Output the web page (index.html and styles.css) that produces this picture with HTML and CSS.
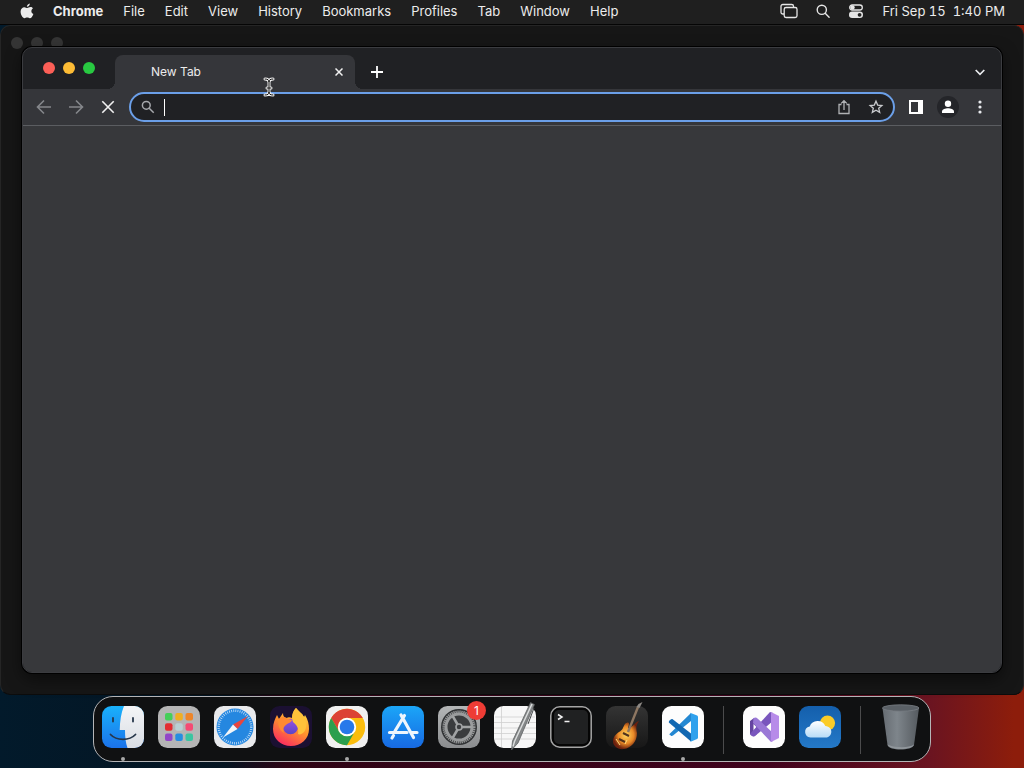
FILE: index.html
```
<!DOCTYPE html>
<html lang="en">
<head>
    <meta charset="utf-8">
    <title>New Tab</title>
    <link rel="stylesheet" href="styles.css">
</head>
<body>
    <header class="menubar">
        <nav class="menus">
            <button class="apple" aria-label="Apple menu">
                <svg width="14" height="16" viewBox="0 0 14 16" fill="#ececec"><path d="M9.8.4c.1 1.7-1.2 3.3-2.9 3.4C6.700 2.200 8.200.6 9.800.4zM12.900 5.400c-2.200 1.400-1.900 4.500.5 5.500-.7 2-2.100 4.300-3.500 4.300-1.100 0-1.400-.7-2.700-.7s-1.700.7-2.700.7C2.700 15.200.6 11.700.6 8.800c0-3 1.900-4.600 3.800-4.600 1.200 0 2.100.8 2.900.8.7 0 1.800-.9 3.200-.9 1 0 1.900.5 2.400 1.300z"/></svg>
            </button>
            <button class="app-name">Chrome</button>
            <button>File</button>
            <button>Edit</button>
            <button>View</button>
            <button>History</button>
            <button>Bookmarks</button>
            <button>Profiles</button>
            <button>Tab</button>
            <button>Window</button>
            <button>Help</button>
        </nav>
        <div class="status">
            <button aria-label="Screen mirroring">
                <svg width="18" height="16" viewBox="0 0 18 16" fill="none" stroke="#e6e6e6" stroke-width="1.300"><path d="M4 11H2.800A1.800 1.800 0 0 1 1 9.200V3.300a1.800 1.800 0 0 1 1.800-1.800h8.900a1.800 1.800 0 0 1 1.800 1.800V4"/><rect x="4.200" y="4.500" width="12.800" height="10" rx="1.800"/></svg>
            </button>
            <button aria-label="Spotlight">
                <svg width="14" height="16" viewBox="0 0 14 16" fill="none" stroke="#e6e6e6" stroke-width="1.400" stroke-linecap="round"><circle cx="5.800" cy="6.800" r="4.600"/><path d="M9.200 10.300l3.900 4"/></svg>
            </button>
            <button aria-label="Control Center">
                <svg width="16" height="16" viewBox="0 0 16 16"><rect x="1.700" y="2" width="12.600" height="5" rx="2.500" fill="none" stroke="#e6e6e6" stroke-width="1.300"/><circle cx="4.500" cy="4.500" r="2.200" fill="#e6e6e6"/><rect x="1" y="8.600" width="14" height="6.400" rx="3.200" fill="#e6e6e6"/><circle cx="11.600" cy="11.800" r="1.900" fill="#222"/></svg>
            </button>
            <time class="clock">Fri Sep 15&nbsp; 1:40 PM</time>
        </div>
    </header>

    <main class="desktop">
        <div class="back-window">
            <div class="lights dim"><span></span><span></span><span></span></div>
        </div>

        <section class="browser">
            <div class="tabstrip">
                <div class="lights">
                    <button class="red" aria-label="Close window"></button>
                    <button class="yellow" aria-label="Minimize window"></button>
                    <button class="green" aria-label="Zoom window"></button>
                </div>
                <div class="tab">
                    <span class="tab-title">New Tab</span>
                    <button class="tab-close" aria-label="Close tab">
                        <svg width="8" height="8" viewBox="0 0 8 8" stroke="#f1f1f1" stroke-width="1.500"><path d="M.5.500l7 7M7.500.500l-7 7"/></svg>
                    </button>
                </div>
                <button class="new-tab" aria-label="New tab">
                    <svg width="12" height="12" viewBox="0 0 12 12" stroke="#fff" stroke-width="1.800"><path d="M6 0v12M0 6h12"/></svg>
                </button>
                <button class="tab-search" aria-label="Search tabs">
                    <svg width="10" height="7" viewBox="0 0 10 7" fill="none" stroke="#e8eaed" stroke-width="1.700"><path d="M.7 1L5 5.300 9.300 1"/></svg>
                </button>
            </div>
            <div class="toolbar">
                <button aria-label="Back">
                    <svg width="16" height="16" viewBox="0 0 16 16" fill="none" stroke="#85878b" stroke-width="1.600"><path d="M15 8H2M8 1.500L1.500 8 8 14.500"/></svg>
                </button>
                <button aria-label="Forward">
                    <svg width="16" height="16" viewBox="0 0 16 16" fill="none" stroke="#85878b" stroke-width="1.600"><path d="M1 8h13M8 1.500L14.500 8 8 14.500"/></svg>
                </button>
                <button aria-label="Stop">
                    <svg width="16" height="16" viewBox="0 0 16 16" stroke="#f1f1f1" stroke-width="1.600"><path d="M2.300 2.300l11.400 11.400M13.700 2.300L2.300 13.700"/></svg>
                </button>
                <div class="omnibox">
                    <svg class="search" width="14" height="14" viewBox="0 0 14 14" fill="none" stroke="#a6a8ac" stroke-width="1.500"><circle cx="5.300" cy="5.300" r="3.900"/><path d="M8.200 8.200l4.500 4.500"/></svg>
                    <span class="caret"></span>
                    <input type="text" aria-label="Address and search bar">
                    <button aria-label="Share">
                        <svg width="14" height="16" viewBox="0 0 14 16" fill="none" stroke="#b0b2b5" stroke-width="1.300"><path d="M4.500 5.500H2v9h10v-9H9.500M7 11V1.800M4.200 4.400L7 1.600l2.800 2.800"/></svg>
                    </button>
                    <button aria-label="Bookmark this tab">
                        <svg width="16" height="16" viewBox="0 0 16 16" fill="none" stroke="#c9cbce" stroke-width="1.300"><path d="M8 2.200l1.700 3.900 4.200.4-3.200 2.800 1 4.100L8 11.300l-3.700 2.100 1-4.100-3.200-2.800 4.200-.4z"/></svg>
                    </button>
                </div>
                <button aria-label="Side panel">
                    <svg width="14" height="14" viewBox="0 0 14 14"><path fill="#fff" fill-rule="evenodd" d="M0 0h14v14H0zM2 2v10h7V2z"/></svg>
                </button>
                <button aria-label="Profile">
                    <svg width="22" height="22" viewBox="0 0 22 22"><circle cx="11" cy="11" r="11" fill="#242529"/><circle cx="11" cy="7.800" r="3.200" fill="#fff"/><path fill="#fff" d="M5 17v-1.500c0-2.200 3.500-3.300 6-3.300s6 1.100 6 3.300V17z"/></svg>
                </button>
                <button aria-label="Chrome menu">
                    <svg width="4" height="14" viewBox="0 0 4 14" fill="#e8eaed"><circle cx="2" cy="2" r="1.600"/><circle cx="2" cy="7" r="1.600"/><circle cx="2" cy="12" r="1.600"/></svg>
                </button>
            </div>
            <div class="page"></div>
        </section>
    </main>

    <nav class="dock">
        <button class="app running" aria-label="Finder">
            <svg viewBox="0 0 42 42">
                <defs>
                    <linearGradient id="finderBlue" x2="0" y2="1"><stop stop-color="#19b1fb"/><stop offset="1" stop-color="#1b72ea"/></linearGradient>
                    <linearGradient id="finderWhite" x2="0" y2="1"><stop stop-color="#f4f5f7"/><stop offset="1" stop-color="#d9dde4"/></linearGradient>
                    <clipPath id="tile"><rect width="42" height="42" rx="9.500"/></clipPath>
                </defs>
                <g clip-path="url(#tile)">
                    <rect width="42" height="42" fill="url(#finderBlue)"/>
                    <path d="M22 0c-3 7-4 15-4.300 24h5.300c0 7 .7 13 2.500 18H42V0z" fill="url(#finderWhite)"/>
                    <path d="M11 12v3.500M31 12v3.500M8.500 28.500c6 6.500 19 6.500 25 0" fill="none" stroke="#26364a" stroke-width="1.800" stroke-linecap="round"/>
                </g>
            </svg>
        </button>
        <button class="app" aria-label="Launchpad">
            <svg viewBox="0 0 42 42">
                <rect width="42" height="42" rx="9.500" fill="#b5b5b5"/>
                <rect x="7" y="7" width="7.500" height="7.500" rx="2" fill="#45cf59"/><rect x="17.300" y="7" width="7.500" height="7.500" rx="2" fill="#efae22"/><rect x="27.500" y="7" width="7.500" height="7.500" rx="2" fill="#ed8529"/>
                <rect x="7" y="17.300" width="7.500" height="7.500" rx="2" fill="#e32c32"/><rect x="17.300" y="17.300" width="7.500" height="7.500" rx="2" fill="#b9d0d4"/><rect x="27.500" y="17.300" width="7.500" height="7.500" rx="2" fill="#f54b74"/>
                <rect x="7" y="27.500" width="7.500" height="7.500" rx="2" fill="#9246c8"/><rect x="17.300" y="27.500" width="7.500" height="7.500" rx="2" fill="#268ee0"/><rect x="27.500" y="27.500" width="7.500" height="7.500" rx="2" fill="#3bc5a0"/>
            </svg>
        </button>
        <button class="app" aria-label="Safari">
            <svg viewBox="0 0 42 42">
                <rect width="42" height="42" rx="9.500" fill="#e9eaec"/>
                <circle cx="21" cy="21" r="18.500" fill="#2587e0"/>
                <circle cx="21" cy="21" r="16.300" fill="none" stroke="#c8e1f8" stroke-width="2.400" stroke-dasharray=".8 1.333"/>
                <path d="M34 10L19 18.500l4.500 4.500z" fill="#e8453e"/><path d="M9 31.500l10-13 4.500 4.500z" fill="#f3f5f7"/>
            </svg>
        </button>
        <button class="app" aria-label="Firefox">
            <svg viewBox="0 0 42 42">
                <defs>
                    <linearGradient id="fox" x1=".85" y1="0" x2=".3" y2="1"><stop stop-color="#ffe045"/><stop offset=".5" stop-color="#ff942c"/><stop offset="1" stop-color="#fb2b60"/></linearGradient>
                    <linearGradient id="globe" x2="0" y2="1"><stop stop-color="#9a51df"/><stop offset="1" stop-color="#5b45c7"/></linearGradient>
                </defs>
                <rect width="42" height="42" rx="9.500" fill="#1b1032"/>
                <path d="M26 2c2 3 6 5 8 9l1-2c3 5 4 9 4 14 0 10-8 17-18 17S3 33 3 23c0-6 2-10 4-14l2 4 4-6c0 3 1 4 3 5 3-1 4-1 6 0 0-4 1-7 4-10z" fill="url(#fox)"/>
                <circle cx="20.500" cy="20.500" r="7.800" fill="url(#globe)"/>
                <path d="M9 13c4-3 6-2 9 0l4 1c-1 3-4 3-6 5-3 2-3 5-2 8-5-3-7-9-5-14z" fill="#ff8a32"/>
                <path d="M26 2c2 3 6 5 8 9 3 6 3 11 0 15-2 2-4 3-6 2 1-5-1-9-5-12-2-5 0-11 3-14z" fill="#ffc23a"/>
            </svg>
        </button>
        <button class="app running" aria-label="Chrome">
            <svg viewBox="0 0 42 42">
                <rect width="42" height="42" rx="9.500" fill="#f0f0f0"/>
                <circle cx="21" cy="21" r="18.200" fill="#fbbd0d"/>
                <path d="M5.240 11.900A18.200 18.200 0 0 1 36.760 11.900H21A9.100 9.100 0 0 0 13.120 25.550z" fill="#dc4234"/>
                <path d="M5.240 11.900A18.200 18.200 0 0 0 21 39.200L28.880 25.550A9.100 9.100 0 0 1 13.120 25.550z" fill="#2c9f4e"/>
                <circle cx="21" cy="21" r="9.200" fill="#fff"/><circle cx="21" cy="21" r="7.300" fill="#2879ea"/>
            </svg>
        </button>
        <button class="app" aria-label="App Store">
            <svg viewBox="0 0 42 42">
                <defs><linearGradient id="store" x2="0" y2="1"><stop stop-color="#1ba6f8"/><stop offset="1" stop-color="#1769e2"/></linearGradient></defs>
                <rect width="42" height="42" rx="9.500" fill="url(#store)"/>
                <path d="M22.500 9.500L13 25M19 9l12.500 22.500M7.500 26.500H25M30 26.500h5M11.500 29.500L10 32" stroke="#eff6fd" stroke-width="3.200" stroke-linecap="round"/>
            </svg>
        </button>
        <button class="app" aria-label="System Settings, 1 notification">
            <svg viewBox="0 0 42 42">
                <defs><linearGradient id="metal" x2="0" y2="1"><stop stop-color="#b4b6b7"/><stop offset="1" stop-color="#8b8d8f"/></linearGradient></defs>
                <rect width="42" height="42" rx="9.500" fill="url(#metal)"/>
                <circle cx="21" cy="21" r="18" fill="#303234"/>
                <circle cx="21" cy="21" r="15.300" fill="none" stroke="#969899" stroke-width="2.500" stroke-dasharray="1.300 .7"/>
                <circle cx="21" cy="21" r="13" fill="#3a3c3e" stroke="#9a9c9d" stroke-width="3"/>
                <path d="M21 21h12.500M21 21l-6.300-10.800M21 21l-6.300 10.800" stroke="#a1a3a4" stroke-width="2.600"/>
                <circle cx="21" cy="21" r="3" fill="#3c3e40" stroke="#a1a3a4" stroke-width="1.600"/>
            </svg>
            <span class="badge">1</span>
        </button>
        <button class="app" aria-label="TextEdit">
            <svg viewBox="0 0 42 42">
                <rect width="42" height="42" rx="9.500" fill="#f7f7f7"/>
                <path d="M1 11h40M0 16.500h42M0 22h42M0 27.500h42M0 33h42M7.500 1v40" stroke="#cfcfcf" stroke-width=".8"/>
                <path d="M36.500-3.500l4 2L24 37l-6.500 7 1-9z" fill="#858889" stroke="#56595a" stroke-width=".7"/>
                <path d="M38-2L20.500 35.500l-1.500 5" fill="none" stroke="#dcdede" stroke-width="1.400"/>
                <path d="M40 2l-6 16" stroke="#444748" stroke-width="1"/>
            </svg>
        </button>
        <button class="app" aria-label="Terminal">
            <svg viewBox="0 0 42 42">
                <rect x=".8" y=".8" width="40.400" height="40.400" rx="9" fill="#050505" stroke="#a5a5a5" stroke-width="1.500"/>
                <rect x="4" y="4" width="34" height="34" rx="5" fill="#202122"/>
                <path d="M8 8.500l4 2.500-4 2.500M14.500 15.500h5" fill="none" stroke="#f2f2f2" stroke-width="1.500"/>
            </svg>
        </button>
        <button class="app" aria-label="GarageBand">
            <svg viewBox="0 0 42 42">
                <defs>
                    <linearGradient id="amp" x2="0" y2="1"><stop stop-color="#343434"/><stop offset="1" stop-color="#171717"/></linearGradient>
                    <radialGradient id="burst"><stop stop-color="#ffd45c"/><stop offset=".6" stop-color="#e98927"/><stop offset="1" stop-color="#6c200d"/></radialGradient>
                </defs>
                <rect width="42" height="42" rx="9.500" fill="url(#amp)"/>
                <path d="M19 18c2-2 4-2 4 0l-1 4c2 2 7-6 11-7-3 4-3 7-2 12 0 9-6 15-13 16-6 1-11-3-11-8 0-4 3-7 6-9 4-2 4-5 6-8z" fill="url(#burst)"/>
                <path d="M22 26L32 1" stroke="#8e7762" stroke-width="2.400"/>
                <path d="M30.500 1l2-3 4-2-3 6z" fill="#8d8985"/>
                <path d="M17 27l6 3M13 33l6 3" stroke="#50311c" stroke-width="2"/>
                <path d="M10 33l4 6M21 34l-2 4" stroke="#ffdc7d" stroke-width="1"/>
            </svg>
        </button>
        <button class="app running" aria-label="Visual Studio Code">
            <svg viewBox="0 0 42 42">
                <rect width="42" height="42" rx="9.500" fill="#fdfdfd"/>
                <path d="M7.500 28L29 7v8L11 29.500c-1 .7-1.700.5-2.300-.1L7 28z" fill="#2488d2"/>
                <path d="M7 15l1.700-1.600c.7-.6 1.400-.7 2.300 0L29 27.500v8L6.800 16.500z" fill="#1268b2"/>
                <path d="M28 6.800l6.500 2.500c1 .4 1.500 1 1.500 2v20c0 1-.5 1.600-1.500 2L28 36c.8-.5 1-1 1-2V9c0-1-.3-1.700-1-2.200z" fill="#2fa1ed"/>
            </svg>
        </button>
        <span class="divider"></span>
        <button class="app" aria-label="Visual Studio">
            <svg viewBox="0 0 42 42">
                <rect width="42" height="42" rx="9.500" fill="#fdfdfd"/>
                <path fill-rule="evenodd" d="M7 15l4-3 3 2v14l-3 2.500L7 28zM10.500 18v7l3.500-3.500z" fill="#6544a0"/>
                <path d="M7 28L27 6l3 1v8L12 30c-2 1-4 0-5-2z" fill="#7956bd"/>
                <path d="M10.500 12c2-1 3-.5 4 .5L30 27v8l-2 1-18-19z" fill="#9a78d6"/>
                <path d="M28 6l8 4v22l-8 4z" fill="#b78be9"/>
            </svg>
        </button>
        <button class="app" aria-label="Weather">
            <svg viewBox="0 0 42 42">
                <defs>
                    <linearGradient id="sky" x2="0" y2="1"><stop stop-color="#145fac"/><stop offset="1" stop-color="#2479c8"/></linearGradient>
                    <linearGradient id="cloud" x2="0" y2="1"><stop stop-color="#fff"/><stop offset="1" stop-color="#b8dcf7"/></linearGradient>
                </defs>
                <rect width="42" height="42" rx="9.500" fill="url(#sky)"/>
                <circle cx="28.500" cy="17" r="7.600" fill="#fbcc28"/>
                <path d="M11.500 31.500a5.600 5.600 0 0 1-.8-11.100 8.500 8.500 0 0 1 15.600-.5c4 .4 6 2.800 6 5.800 0 3.200-2.300 5.800-5.400 5.800z" fill="url(#cloud)"/>
            </svg>
        </button>
        <span class="divider"></span>
        <button class="app" aria-label="Trash">
            <svg viewBox="0 0 42 42">
                <defs><linearGradient id="bin"><stop stop-color="#666c72"/><stop offset=".4" stop-color="#7e858b"/><stop offset="1" stop-color="#555a5f"/></linearGradient></defs>
                <path d="M2.500 2l5 37c1 6 25 6 26.500 0l5-37z" fill="url(#bin)"/>
                <ellipse cx="20.700" cy="2" rx="18.300" ry="3.200" fill="#5a6066" stroke="#787e84" stroke-width=".8"/>
                <path d="M7.500 38.500c5 3 21 4 26.500 0-1 6-25 6-26.500 0z" fill="#90969b"/>
            </svg>
        </button>
    </nav>

    <svg class="pointer" width="12" height="20" viewBox="0 0 12 20" fill="none" stroke-linecap="round"><path d="M2 2c3 0 4 1 4 3 0-2 1-3 4-3M6 5v10M2 18c3 0 4-1 4-3 0 2 1 3 4 3M4 11h4" stroke="#f2f2f2" stroke-width="3"/><path d="M2 2c3 0 4 1 4 3 0-2 1-3 4-3M6 5v10M2 18c3 0 4-1 4-3 0 2 1 3 4 3M4 11h4" stroke="#111" stroke-width="1"/></svg>
</body>
</html>
```
FILE: styles.css
```
* { box-sizing: border-box; }
body {
    margin: 0;
    height: 100vh;
    display: flex;
    flex-direction: column;
    overflow: hidden;
    font-family: Inter, "Liberation Sans", sans-serif;
    font-size: 13px;
    color: #ececec;
    background: linear-gradient(90deg, #021a2b 0%, #041421 22%, #2e0415 28%, #40031d 75%, #6b1420 91%, #8d1d0b 99%);
}
button { display: flex; align-items: center; justify-content: center; padding: 0; border: none; background: none; color: inherit; font: inherit; }
svg { display: block; flex: none; }

/* menu bar */
.menubar { display: flex; justify-content: space-between; height: 25px; padding: 0 19px 2px 20px; background: #1f1f1f; border-bottom: 1px solid #050505; }
.menus { display: flex; gap: 20px; }
.menus .apple { margin-right: -1px; }
.menus .app-name { font-weight: 700; }
.status { display: flex; align-items: center; gap: 18px; }
.clock { font-variant-numeric: tabular-nums; }

/* windows */
.desktop { position: relative; flex: 1; }
.back-window { height: 100%; padding: 11px 10px; background: #161616; border: 1px solid #252525; border-bottom-color: #0c0c0c; border-radius: 10px; }
.lights { display: flex; gap: 8px; }
.lights button, .lights span { width: 12px; height: 12px; border-radius: 50%; }
.lights .red { background: #fc5f57; }
.lights .yellow { background: #fdbc35; }
.lights .green { background: #28c941; }
.dim span { background: #353535; }
.browser { position: absolute; inset: 22px; display: flex; flex-direction: column; overflow: hidden; border: 1px solid #3b3c40; border-radius: 10px; background: #202124; box-shadow: 0 0 0 1px #000, 0 6px 16px rgba(0, 0, 0, 0.5); }

.tabstrip { display: flex; align-items: flex-end; height: 41px; padding: 0 13px 0 20px; }
.tabstrip .lights { margin-right: 20px; padding-bottom: 15px; }
.tab { position: relative; display: flex; align-items: center; justify-content: space-between; width: 240px; height: 34px; padding: 0 12px 0 36px; background: #35363a; border-radius: 8px 8px 0 0; }
.tab::before, .tab::after { content: ""; position: absolute; bottom: 0; width: 8px; height: 8px; }
.tab::before { left: -8px; background: radial-gradient(circle at 0 0, #202124 8px, #35363a 8px); }
.tab::after { right: -8px; background: radial-gradient(circle at 100% 0, #202124 8px, #35363a 8px); }
.tab-title { padding-bottom: 2px; font-size: 12px; }
.tab-close, .new-tab, .tab-search { height: 34px; }
.new-tab { margin-left: 16px; }
.tab-search { margin-left: auto; width: 16px; }

.toolbar { display: flex; align-items: center; height: 37px; padding: 0 5px; background: #35363a; border-bottom: 1px solid #5b5d61; }
.toolbar > button { width: 32px; height: 32px; }
.omnibox { flex: 1; display: flex; align-items: center; height: 30px; margin: 0 5px; padding: 0 1px 0 10px; background: #202124; border: 2px solid #6b9fe8; border-radius: 15px; }
.omnibox .search { margin-right: 9px; }
.omnibox .caret { width: 1px; height: 17px; background: #fff; }
.omnibox input { flex: 1; min-width: 0; padding: 0; border: none; outline: none; background: none; color: #fff; font: inherit; }
.omnibox button { width: 32px; height: 26px; }
.page { flex: 1; background: #37383b; }

/* dock */
.dock { display: flex; align-items: flex-start; align-self: center; gap: 14px; height: 66px; margin: 1px 0 6px; padding: 9px 8px 7px; background: #101112; border: 1px solid #b5b5b7; border-radius: 20px; }
.app { position: relative; width: 42px; height: 42px; }
.app svg { width: 42px; height: 42px; overflow: visible; }
.running::after { content: ""; position: absolute; left: 19px; bottom: -13px; width: 4px; height: 4px; border-radius: 50%; background: #a8a8a8; }
.divider { width: 1px; height: 48px; margin: 0 5px; background: #4b4b4c; }
.badge { position: absolute; top: -5px; right: -6px; width: 19px; height: 19px; border-radius: 50%; background: #ee3c35; color: #fff; font-size: 12px; line-height: 19px; text-align: center; }

.pointer { position: absolute; left: 263px; top: 77px; }
```
